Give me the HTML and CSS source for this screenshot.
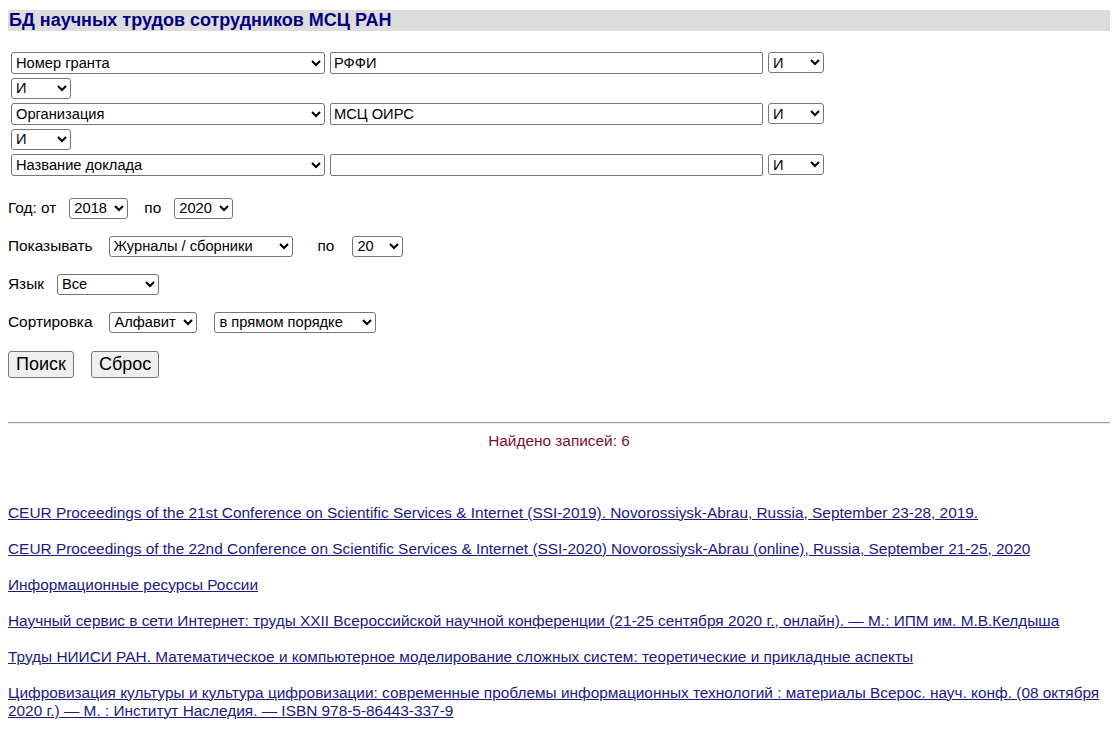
FILE: index.html
```html
<!DOCTYPE html>
<html lang="ru">
<head>
  <meta charset="UTF-8" />
  <title>БД научных трудов сотрудников МСЦ РАН</title>
  <link rel="stylesheet" href="styles.css">
</head>
<body>
  <h1 class="title">БД научных трудов сотрудников МСЦ РАН</h1>

  <form class="search" onsubmit="return false">
    <div class="criteria">
      <div class="crit-row">
        <select class="field">
          <option>Номер гранта</option>
          <option>Организация</option>
          <option>Название доклада</option>
        </select>
        <input class="value" type="text" value="РФФИ" />
        <select class="op"><option>И</option><option>ИЛИ</option></select>
      </div>
      <div class="crit-row">
        <select class="op op-join"><option>И</option><option>ИЛИ</option></select>
      </div>
      <div class="crit-row">
        <select class="field">
          <option>Организация</option>
          <option>Номер гранта</option>
          <option>Название доклада</option>
        </select>
        <input class="value" type="text" value="МСЦ ОИРС" />
        <select class="op"><option>И</option><option>ИЛИ</option></select>
      </div>
      <div class="crit-row">
        <select class="op op-join"><option>И</option><option>ИЛИ</option></select>
      </div>
      <div class="crit-row">
        <select class="field">
          <option>Название доклада</option>
          <option>Номер гранта</option>
          <option>Организация</option>
        </select>
        <input class="value" type="text" value="" />
        <select class="op"><option>И</option><option>ИЛИ</option></select>
      </div>
    </div>

    <div class="opt-row row-years">
      <span class="lbl">Год: от</span>
      <select class="year year-from"><option>2018</option></select>
      <span class="lbl lbl-to">по</span>
      <select class="year year-to"><option>2020</option></select>
    </div>

    <div class="opt-row">
      <span class="lbl">Показывать</span>
      <select class="kind"><option>Журналы / сборники</option><option>Статьи</option></select>
      <span class="lbl lbl-per">по</span>
      <select class="per-page"><option>20</option><option>50</option></select>
    </div>

    <div class="opt-row">
      <span class="lbl">Язык</span>
      <select class="lang"><option>Все</option><option>Русский</option><option>Английский</option></select>
    </div>

    <div class="opt-row">
      <span class="lbl">Сортировка</span>
      <select class="sort"><option>Алфавит</option><option>Год</option></select>
      <select class="order"><option>в прямом порядке</option><option>в обратном порядке</option></select>
    </div>

    <div class="actions">
      <button type="submit">Поиск</button>
      <button type="reset">Сброс</button>
    </div>
  </form>

  <hr class="sep" />
  <p class="found">Найдено записей: 6</p>

  <ul class="results">
    <li><a href="#">CEUR Proceedings of the 21st Conference on Scientific Services &amp; Internet (SSI-2019). Novorossiysk-Abrau, Russia, September 23-28, 2019.</a></li>
    <li><a href="#">CEUR Proceedings of the 22nd Conference on Scientific Services &amp; Internet (SSI-2020) Novorossiysk-Abrau (online), Russia, September 21-25, 2020</a></li>
    <li><a href="#">Информационные ресурсы России</a></li>
    <li><a href="#">Научный сервис в сети Интернет: труды XXII Всероссийской научной конференции (21-25 сентября 2020 г., онлайн). — М.: ИПМ им. М.В.Келдыша</a></li>
    <li><a href="#">Труды НИИСИ РАН. Математическое и компьютерное моделирование сложных систем: теоретические и прикладные аспекты</a></li>
    <li><a href="#">Цифровизация культуры и культура цифровизации: современные проблемы информационных технологий : материалы Всерос. науч. конф. (08 октября 2020 г.) — М. : Институт Наследия. — ISBN 978-5-86443-337-9</a></li>
  </ul>
</body>
</html>
```

FILE: styles.css
```css
body {
  margin: 10px 2px 8px 8px;
  font-family: "Liberation Sans", Arial, sans-serif;
  font-size: 15.4px;
  color: #000;
  background: #fff;
}
.title {
  margin: 0;
  padding: 0 1px;
  height: 21px;
  line-height: 21px;
  font-size: 18px;
  font-weight: bold;
  color: #000080;
  background: #dddddd;
}

select, input, button {
  font-family: "Liberation Sans", Arial, sans-serif;
  font-size: 14.67px;
  color: #000;
  box-sizing: border-box;
  margin: 0;
}
select {
  height: 21px;
  padding: 0;
  border: 1px solid #767676;
  border-radius: 3px;
  background: #fff;
}
input.value {
  height: 22px;
  width: 433px;
  padding: 1px 3px;
  border: 1px solid #767676;
  border-radius: 2px;
}

/* search criteria */
.criteria {
  margin-top: 21px;
  padding-left: 3px;
  display: flex;
  flex-direction: column;
  gap: 4px;
}
.crit-row {
  display: flex;
  align-items: center;
  gap: 5px;
  height: 21.5px;
}
.crit-row .field { width: 314px; height: 22px; }
.op { width: 56px; }
.op-join { width: 60px; }

/* options */
.opt-row {
  display: flex;
  align-items: center;
  height: 21px;
  margin-top: 17px;
}
.row-years { margin-top: 22px; }
.year { width: 59px; }
.year-from { margin-left: 13px; }
.lbl-to { margin-left: 16px; }
.year-to { margin-left: 13px; }
.kind { width: 184px; margin-left: 16px; }
.lbl-per { margin-left: 25px; }
.per-page { width: 51px; margin-left: 18px; }
.lang { width: 102px; margin-left: 13px; }
.sort { width: 88px; margin-left: 17px; }
.order { width: 162px; margin-left: 17px; }

.actions {
  display: flex;
  gap: 17px;
  margin-top: 18px;
}
.actions button {
  height: 27px;
  padding: 0 7px;
  font-size: 18px;
  background: #efefef;
  border: 1px solid #767676;
  border-radius: 3px;
}

.sep {
  margin: 44px 0 0;
  border: 0;
  border-top: 1px solid #9a9a9a;
  border-bottom: 1px solid #eee;
}
.found {
  margin: 8px 0 0;
  text-align: center;
  color: #7a1030;
}

.results {
  list-style: none;
  margin: 54px 0 0;
  padding: 0;
}
.results li {
  margin-bottom: 18px;
  line-height: 18px;
}
.results a {
  color: #1a1a80;
  text-decoration: underline;
}
```
